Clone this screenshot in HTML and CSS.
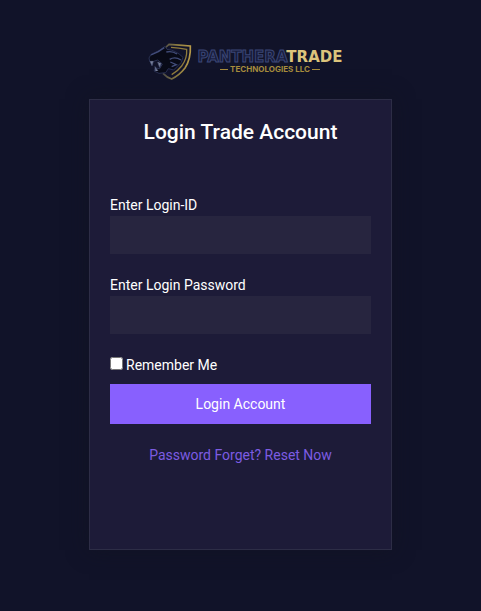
FILE: index.html
```
<!DOCTYPE html>
<html lang="en">
<head>
<meta charset="utf-8">
<meta name="viewport" content="width=device-width, initial-scale=1">
<title>Login Trade Account</title>
<link rel="stylesheet" href="styles.css">
</head>
<body>
<main class="page">
  <header class="brand">
    <svg class="brand-mark" viewBox="0 0 150 138" aria-hidden="true">
      <defs>
        <linearGradient id="gold" x1="0" y1="0" x2="1" y2="0">
          <stop offset="0" stop-color="#4d4c48"/>
          <stop offset=".5" stop-color="#8a7a40"/>
          <stop offset="1" stop-color="#b79a49"/>
        </linearGradient>
      </defs>
      <path d="M60 30 72 19Q102 21 136 24Q138 62 120 90Q104 111 80 123Q66 119 54 106" fill="#10122a" stroke="url(#gold)" stroke-width="5"/>
      <path d="M78 28Q102 30 125 34Q127 61 110 84Q98 100 80 110" fill="none" stroke="#8f7b3c" stroke-width="4"/>
      <path d="M12 60 18 49 42 38 60 25 66 34Q92 36 114 58L108 74 86 96 70 92 62 104 42 106 27 99 32 90 44 92 52 78 38 66 26 70 14 70Z" fill="#080a17" stroke="#293052" stroke-width="3"/>
      <path d="M18 51 40 41 58 29M64 42Q82 38 96 48M74 64Q90 54 108 66M76 72 94 80 80 86" fill="none" stroke="#434e7c" stroke-width="4"/>
      <path d="M15 70 21 83 25 70M38 72 44 88 48 76M31 99 30 86 39 99" fill="#7d849c" stroke="#555f83" stroke-width="2"/>
    </svg>
    <div class="brand-text">
      <div class="brand-name"><span class="brand-first">PANTHERA</span><span class="brand-last">TRADE</span></div>
      <div class="brand-tag">TECHNOLOGIES LLC</div>
    </div>
  </header>

  <form class="card">
    <h1 class="title">Login Trade Account</h1>
    <div class="field">
      <label for="login-id">Enter Login-ID</label>
      <input class="input" id="login-id" type="text">
    </div>
    <div class="field">
      <label for="password">Enter Login Password</label>
      <input class="input" id="password" type="password">
    </div>
    <div class="remember">
      <input class="check" id="remember" type="checkbox">
      <label for="remember">Remember Me</label>
    </div>
    <button class="submit" type="submit">Login Account</button>
    <a class="reset" href="#">Password Forget? Reset Now</a>
  </form>
</main>
</body>
</html>
```
FILE: styles.css
```
* {
  box-sizing: border-box;
}

body {
  margin: 0;
  background: #111329;
  color: #fff;
  font-family: Roboto, sans-serif;
  font-size: 14px;
  line-height: 22px;
}

.page {
  display: flex;
  flex-direction: column;
  align-items: center;
  min-height: 100vh;
  padding: 38px 20px;
}

.brand {
  display: flex;
  align-items: flex-start;
  gap: 3px;
  margin-bottom: 15px;
  padding-left: 6px;
}

.brand-mark {
  width: 50px;
  height: 46px;
}

.brand-text {
  padding-top: 12px;
  text-align: center;
}

.brand-name {
  font-family: "DejaVu Sans", sans-serif;
  font-size: 15px;
  font-weight: 700;
  line-height: 15px;
}

.brand-first {
  color: #171c3b;
  -webkit-text-stroke: 1px #3b4676;
}

.brand-last {
  color: #dcc47c;
}

.brand-tag {
  display: flex;
  align-items: center;
  justify-content: center;
  gap: 2px;
  color: #a78c3d;
  font-family: Inter, sans-serif;
  font-size: 8px;
  font-weight: 700;
  line-height: 8px;
}

.brand-tag::before,
.brand-tag::after {
  content: "";
  width: 8px;
  height: 1px;
  background: #a78c3d;
}

.card {
  display: flex;
  flex-direction: column;
  width: 100%;
  max-width: 303px;
  padding: 20px 20px 83px;
  border: 1px solid #2d2d46;
  background: #1d1b38;
  box-shadow: 0 0 20px rgba(18, 20, 32, 0.6);
}

.title {
  margin: 0 0 50px;
  font-size: 21px;
  font-weight: 500;
  line-height: 24px;
  text-align: center;
}

.field {
  display: flex;
  flex-direction: column;
  margin-bottom: 20px;
}

.input {
  width: 100%;
  height: 38px;
  padding: 8px 12px;
  border: 0;
  border-radius: 0;
  background: #27253f;
  color: #fff;
  font: inherit;
}

.remember {
  display: flex;
  align-items: center;
  gap: 3px;
  margin-bottom: 8px;
}

.check {
  width: 13px;
  height: 13px;
  margin: 0 0 3px;
}

.submit {
  height: 40px;
  padding: 0 12px;
  border: 0;
  background: #8860fe;
  color: #fff;
  font: inherit;
}

.reset {
  margin-top: 20px;
  color: #7c5ce2;
  text-align: center;
  text-decoration: none;
}
```
